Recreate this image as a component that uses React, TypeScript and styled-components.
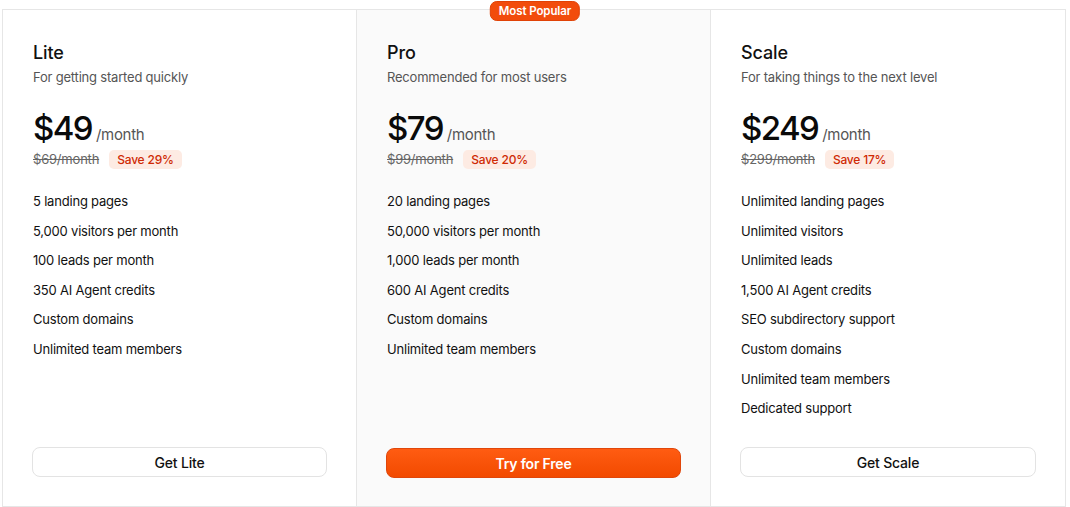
import React from "react";
import styled, { createGlobalStyle } from "styled-components";

const Global = createGlobalStyle`
  html, body { margin: 0; padding: 0; background: #ffffff; }
  body { font-family: Inter, "Noto Sans", Arial, sans-serif; color: #111111; -webkit-font-smoothing: antialiased; }
`;

const Page = styled.div`
  padding: 9px 4px 0 2px;
  width: 1070px;
  box-sizing: border-box;
`;

const Grid = styled.div`
  position: relative;
  display: grid;
  grid-template-columns: repeat(3, 1fr);
  border: 1px solid #e6e6e6;
  height: 498px;
  box-sizing: border-box;
`;

const Column = styled.div<{ $featured?: boolean; $last?: boolean }>`
  display: flex;
  flex-direction: column;
  padding: 31px 29px 29px 30px;
  background: ${(p) => (p.$featured ? "#fafafa" : "#ffffff")};
  border-right: ${(p) => (p.$last ? "none" : "1px solid #e6e6e6")};
`;

const PopularBadge = styled.div`
  position: absolute;
  top: -9px;
  left: 50%;
  transform: translateX(-50%);
  margin-left: 1px;
  background: #f24c0c;
  color: #ffffff;
  font-size: 11.5px;
  font-weight: 600;
  line-height: 18px;
  letter-spacing: -0.1px;
  padding: 0 8px;
  border-radius: 7px;
  border: 1px solid #e04206;
  white-space: nowrap;
`;

const Title = styled.div`
  font-size: 18px;
  font-weight: 500;
  line-height: 24px;
  letter-spacing: -0.1px;
  color: #111111;
`;

const Subtitle = styled.div`
  margin-top: 3px;
  font-size: 13px;
  line-height: 18px;
  letter-spacing: -0.2px;
  color: #555555;
`;

const PriceRow = styled.div`
  margin-top: 22px;
  display: flex;
  align-items: baseline;
  gap: 4px;
`;

const Price = styled.span`
  font-size: 33px;
  font-weight: 500;
  line-height: 40px;
  letter-spacing: -1.6px;
  color: #0a0a0a;
`;

const Per = styled.span`
  font-size: 15px;
  letter-spacing: -0.3px;
  color: #555555;
`;

const DiscountRow = styled.div`
  margin-top: 2px;
  display: flex;
  align-items: center;
  gap: 10px;
`;

const OldPrice = styled.span`
  font-size: 13px;
  line-height: 19px;
  letter-spacing: -0.2px;
  color: #666666;
  text-decoration: line-through;
`;

const SaveBadge = styled.span`
  background: #fdebe3;
  color: #cf2a04;
  font-size: 12px;
  font-weight: 500;
  line-height: 19px;
  letter-spacing: -0.2px;
  padding: 0 8px;
  border-radius: 5px;
`;

const Features = styled.ul`
  list-style: none;
  margin: 23px 0 0 0;
  padding: 0;
  display: flex;
  flex-direction: column;
  gap: 11.6px;
`;

const Feature = styled.li`
  font-size: 13px;
  line-height: 18px;
  letter-spacing: -0.2px;
  color: #111111;
`;

const Button = styled.button<{ $primary?: boolean }>`
  margin-top: auto;
  height: 30px;
  width: calc(100% + 1px);
  margin-left: -1px;
  border-radius: 8px;
  font-family: inherit;
  font-size: 14px;
  letter-spacing: -0.2px;
  font-weight: ${(p) => (p.$primary ? 600 : 500)};
  cursor: pointer;
  color: ${(p) => (p.$primary ? "#ffffff" : "#111111")};
  background: ${(p) =>
    p.$primary ? "linear-gradient(180deg, #ff5c12 0%, #f24a00 100%)" : "#ffffff"};
  border: 1px solid ${(p) => (p.$primary ? "#e0460a" : "#e3e3e3")};
  transform: ${(p) => (p.$primary ? "translateY(1px)" : "none")};
`;

type Plan = {
  name: string;
  tagline: string;
  price: string;
  old: string;
  save: string;
  features: string[];
  cta: string;
  featured?: boolean;
};

const plans: Plan[] = [
  {
    name: "Lite",
    tagline: "For getting started quickly",
    price: "$49",
    old: "$69/month",
    save: "Save 29%",
    features: [
      "5 landing pages",
      "5,000 visitors per month",
      "100 leads per month",
      "350 AI Agent credits",
      "Custom domains",
      "Unlimited team members",
    ],
    cta: "Get Lite",
  },
  {
    name: "Pro",
    tagline: "Recommended for most users",
    price: "$79",
    old: "$99/month",
    save: "Save 20%",
    features: [
      "20 landing pages",
      "50,000 visitors per month",
      "1,000 leads per month",
      "600 AI Agent credits",
      "Custom domains",
      "Unlimited team members",
    ],
    cta: "Try for Free",
    featured: true,
  },
  {
    name: "Scale",
    tagline: "For taking things to the next level",
    price: "$249",
    old: "$299/month",
    save: "Save 17%",
    features: [
      "Unlimited landing pages",
      "Unlimited visitors",
      "Unlimited leads",
      "1,500 AI Agent credits",
      "SEO subdirectory support",
      "Custom domains",
      "Unlimited team members",
      "Dedicated support",
    ],
    cta: "Get Scale",
  },
];

export default function App() {
  return (
    <>
      <Global />
      <Page>
        <Grid>
          <PopularBadge>Most Popular</PopularBadge>
          {plans.map((p, i) => (
            <Column key={p.name} $featured={p.featured} $last={i === plans.length - 1}>
              <Title>{p.name}</Title>
              <Subtitle>{p.tagline}</Subtitle>
              <PriceRow>
                <Price>{p.price}</Price>
                <Per>/month</Per>
              </PriceRow>
              <DiscountRow>
                <OldPrice>{p.old}</OldPrice>
                <SaveBadge>{p.save}</SaveBadge>
              </DiscountRow>
              <Features>
                {p.features.map((f) => (
                  <Feature key={f}>{f}</Feature>
                ))}
              </Features>
              <Button $primary={p.featured}>{p.cta}</Button>
            </Column>
          ))}
        </Grid>
      </Page>
    </>
  );
}
